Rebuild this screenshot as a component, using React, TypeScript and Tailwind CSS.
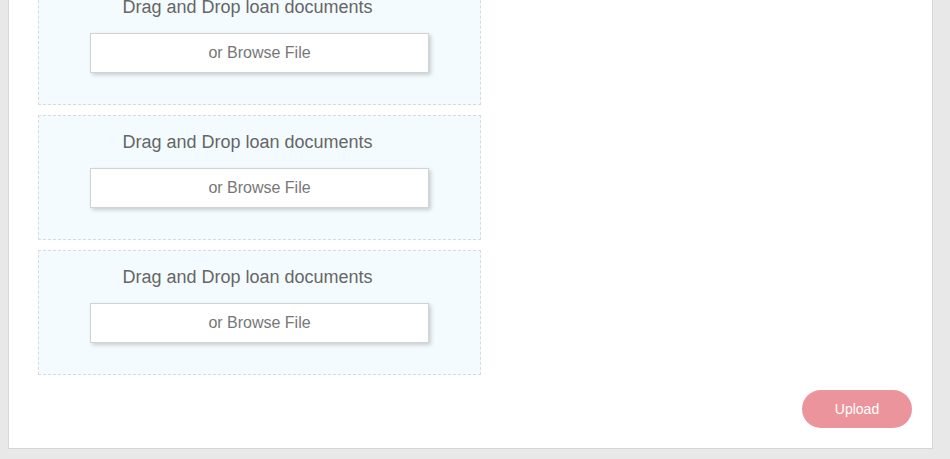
const boxes = [1, 2, 3];

function DropZone() {
  return (
    <div className="w-[443px] border border-dashed border-[#d3dcdf] bg-[#f3fbff] pt-[16px] pb-[31px] flex flex-col items-center">
      <p className="text-[18px] leading-[20px] text-[#666666] pr-[24px]">Drag and Drop loan documents</p>
      <button className="mt-[16px] w-[339px] h-[40px] bg-white border border-[#d3d3d3] shadow-[2px_2px_4px_rgba(0,0,0,0.18)] text-[16px] text-[#777777]">
        or Browse File
      </button>
    </div>
  );
}

export default function App() {
  return (
    <div className="min-h-[459px] bg-[#e8e8e8] font-['Liberation_Sans',Arial,sans-serif] overflow-hidden">
      <div className="ml-2 w-[925px] -mt-[40px] bg-white border border-[#d6d6d6] pt-[19px] pl-[29px] pr-[20px] pb-[20px]">
        <div className="flex flex-col gap-[10px]">
          {boxes.map((b) => (
            <DropZone key={b} />
          ))}
        </div>
        <div className="flex justify-end mt-[15px]">
          <button className="w-[110px] h-[38px] rounded-full bg-[#eb949b] text-white text-[14px]">Upload</button>
        </div>
      </div>
    </div>
  );
}
